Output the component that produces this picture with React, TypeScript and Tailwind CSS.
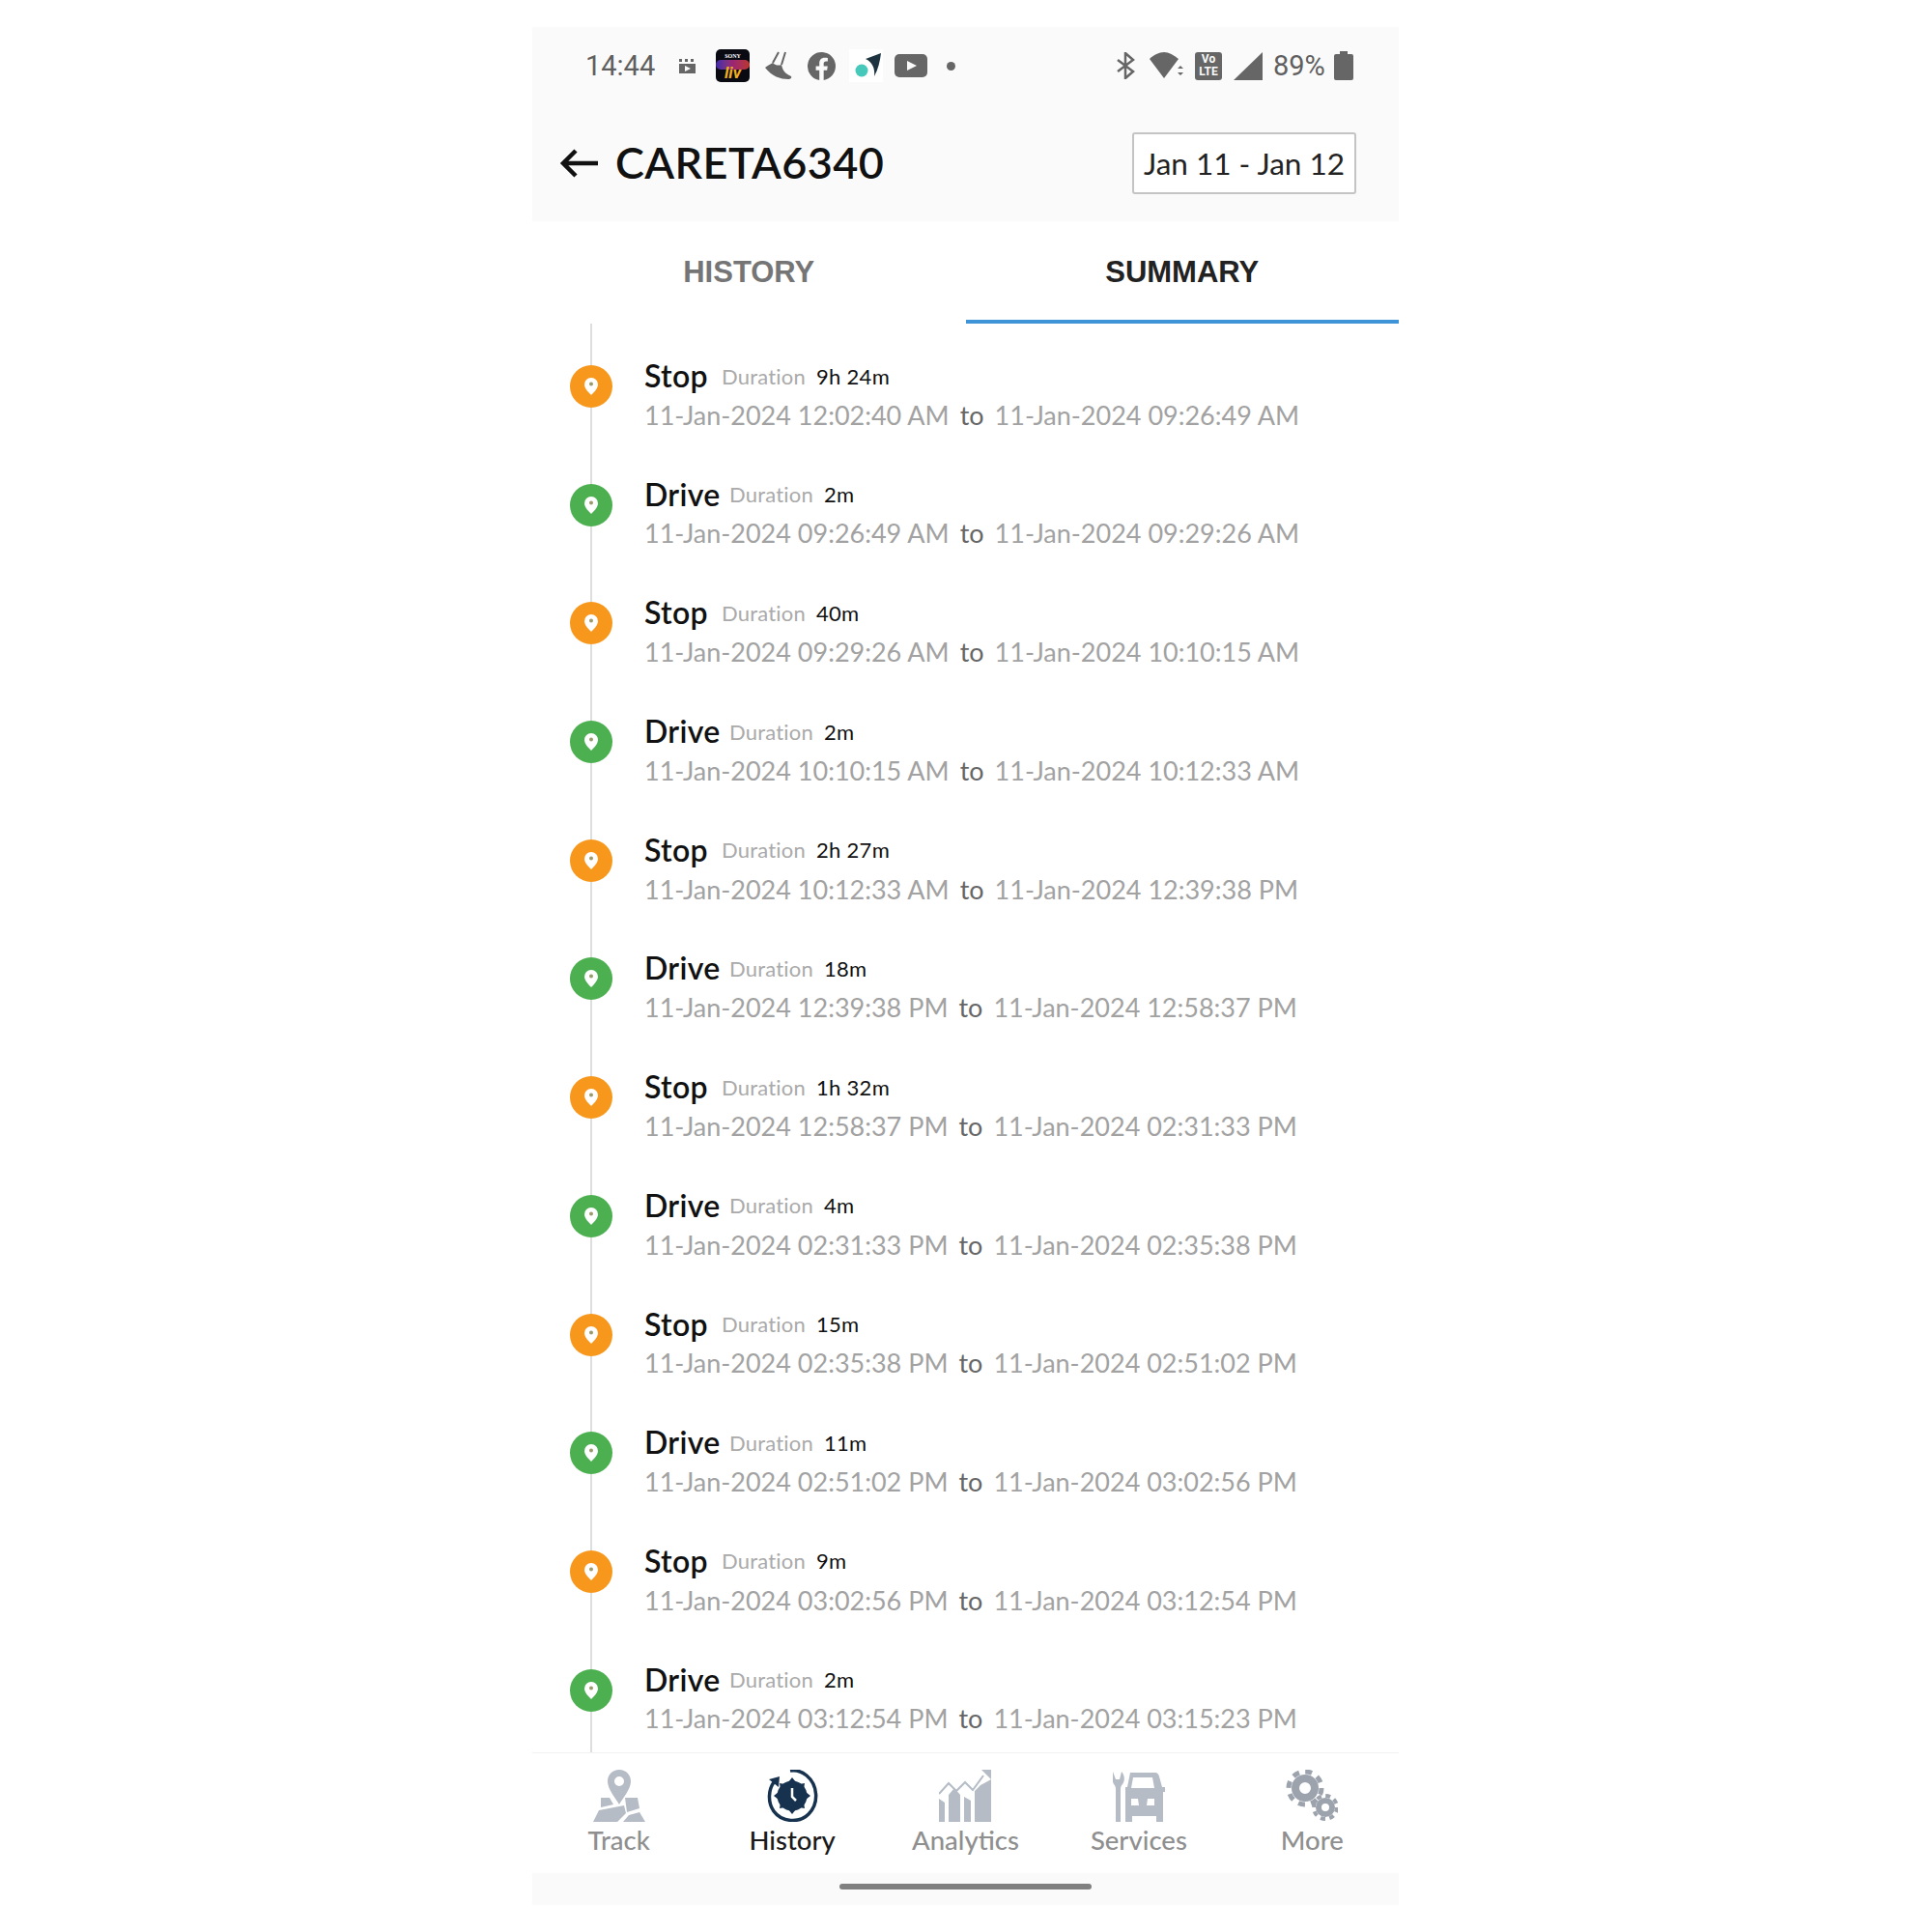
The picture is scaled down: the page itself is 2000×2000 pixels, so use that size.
import React from 'react';

const rows = [
  { type: 'Stop', dur: '9h 24m', from: '11-Jan-2024 12:02:40 AM', to: '11-Jan-2024 09:26:49 AM' },
  { type: 'Drive', dur: '2m', from: '11-Jan-2024 09:26:49 AM', to: '11-Jan-2024 09:29:26 AM' },
  { type: 'Stop', dur: '40m', from: '11-Jan-2024 09:29:26 AM', to: '11-Jan-2024 10:10:15 AM' },
  { type: 'Drive', dur: '2m', from: '11-Jan-2024 10:10:15 AM', to: '11-Jan-2024 10:12:33 AM' },
  { type: 'Stop', dur: '2h 27m', from: '11-Jan-2024 10:12:33 AM', to: '11-Jan-2024 12:39:38 PM' },
  { type: 'Drive', dur: '18m', from: '11-Jan-2024 12:39:38 PM', to: '11-Jan-2024 12:58:37 PM' },
  { type: 'Stop', dur: '1h 32m', from: '11-Jan-2024 12:58:37 PM', to: '11-Jan-2024 02:31:33 PM' },
  { type: 'Drive', dur: '4m', from: '11-Jan-2024 02:31:33 PM', to: '11-Jan-2024 02:35:38 PM' },
  { type: 'Stop', dur: '15m', from: '11-Jan-2024 02:35:38 PM', to: '11-Jan-2024 02:51:02 PM' },
  { type: 'Drive', dur: '11m', from: '11-Jan-2024 02:51:02 PM', to: '11-Jan-2024 03:02:56 PM' },
  { type: 'Stop', dur: '9m', from: '11-Jan-2024 03:02:56 PM', to: '11-Jan-2024 03:12:54 PM' },
  { type: 'Drive', dur: '2m', from: '11-Jan-2024 03:12:54 PM', to: '11-Jan-2024 03:15:23 PM' },
];

function StatusBar() {
  return (
    <div className="flex items-center h-[80px] pl-[55px] pr-[47px] text-[#5f5f5f] font-['Roboto',sans-serif]">
      <span className="text-[29px] w-[71px] pt-[1px]">14:44</span>
      <svg className="ml-[25px]" width="19" height="17" viewBox="0 0 19 17" fill="#666">
        <path d="M1 1h3v3H1zM7 1h3v3H7zM13 1h3v3h-3zM1 6h17v10H1z" />
        <path d="M7 8l6 3-6 3z" fill="#fafafa" />
      </svg>
      <div className="ml-[20px] w-[35px] h-[34px] rounded-[5px] bg-[#0a0a12] flex flex-col items-center overflow-hidden relative">
        <span className="text-[6px] leading-[8px] mt-[3px] font-bold text-white font-['Liberation_Serif',serif]">SONY</span>
        <div className="absolute left-0 right-0 top-[11px] h-[10px] bg-gradient-to-r from-[#4a2bd0] via-[#c02a8a] to-[#e8402a] opacity-80 rounded-full" />
        <span className="absolute bottom-[1px] text-[17px] leading-[17px] font-bold text-[#f0b020] italic">liv</span>
      </div>
      <svg className="ml-[15px]" width="30" height="30" viewBox="0 0 30 30" fill="none" stroke="#666" strokeWidth="2">
        <path d="M15 1L9 12M22 1l-4 13" />
        <path d="M9 12c3 3 6 3 9 2 1 5 3 9 10 12 1 2-1 3-3 3-8 0-17-3-24-12 2-2 5-3 8-5z" fill="#666" stroke="none" />
      </svg>
      <svg className="ml-[15px]" width="29" height="29" viewBox="0 0 24 24" fill="#666">
        <path d="M24 12a12 12 0 1 0-13.900 11.900v-8.400H7.100V12h3V9.400c0-3 1.800-4.700 4.500-4.700 1.300 0 2.700.2 2.700.2v3h-1.500c-1.500 0-2 .9-2 1.900V12h3.400l-.5 3.500h-2.900v8.400A12 12 0 0 0 24 12z" />
      </svg>
      <div className="ml-[14px] w-[35px] h-[34px] bg-white flex items-center justify-center">
        <svg width="33" height="30" viewBox="0 0 33 30">
          <path d="M16 8L32 2c-1 8-3 17-7 24 1-8-2-15-9-18z" fill="#1d3440" />
          <circle cx="12" cy="20" r="6.500" fill="#46c8bb" />
        </svg>
      </div>
      <svg className="ml-[12px]" width="34" height="24" viewBox="0 0 34 24">
        <rect width="34" height="24" rx="5" fill="#666" />
        <path d="M13 7l10 5-10 5z" fill="#fafafa" />
      </svg>
      <span className="ml-[20px] w-[9px] h-[9px] rounded-full bg-[#666]" />
      <div className="flex-1" />
      <svg width="19" height="28" viewBox="0 0 19 28" fill="none" stroke="#666" strokeWidth="2.500">
        <path d="M1 8l16 12-8 7V1l8 7L1 20" />
      </svg>
      <svg className="ml-[15px]" width="35" height="28" viewBox="0 0 35 28" fill="#666">
        <path d="M0 7C4 3 10 0 15 0s10 3 15 7L15 27z" />
        <path d="M29 17l3-3 3 3zM29 21l3 3 3-3z" />
      </svg>
      <div className="ml-[12px] w-[28px] h-[29px] rounded-[3px] bg-[#666] flex flex-col items-center justify-center text-[#fafafa] text-[12px] leading-[13px] font-bold">
        <span>Vo</span>
        <span>LTE</span>
      </div>
      <svg className="ml-[12px]" width="30" height="29" viewBox="0 0 30 29" fill="#666">
        <path d="M30 0v29H0z" />
      </svg>
      <span className="ml-[11px] text-[29px] w-[53px] pt-[1px]">89%</span>
      <svg className="ml-[10px]" width="20" height="30" viewBox="0 0 20 30" fill="#666">
        <path d="M6 0h8v3h4a2 2 0 0 1 2 2v23a2 2 0 0 1-2 2H2a2 2 0 0 1-2-2V5a2 2 0 0 1 2-2h4z" />
      </svg>
    </div>
  );
}

function Header() {
  return (
    <div className="bg-[#fafafa] h-[201px] flex flex-col">
      <StatusBar />
      <div className="flex items-center h-[64px] mt-[29px] pl-[28px] pr-[44px]">
        <svg width="40" height="32" viewBox="0 0 40 32" fill="none" stroke="#111" strokeWidth="4.500">
          <path d="M40 16H4M17 3L4 16l13 13" />
        </svg>
        <h1 className="ml-[18px] text-[45px] font-semibold text-[#111] tracking-[0.4px] font-['Lato',sans-serif]">CARETA6340</h1>
        <div className="ml-auto w-[232px] h-[64px] bg-white border-2 border-[#c4c4c4] rounded-[3px] flex items-center justify-center pt-[2px] text-[31.5px] text-[#222] font-['Lato',sans-serif]">
          Jan 11 - Jan 12
        </div>
      </div>
    </div>
  );
}

function Tabs() {
  return (
    <div className="grid grid-cols-2 h-[106px] text-[31px] font-bold font-['Liberation_Sans',sans-serif]">
      <div className="flex items-center justify-center text-[#757575] pt-[1px]">HISTORY</div>
      <div className="flex items-center justify-center text-[#222] pt-[4px] border-b-4 border-[#3f94d8]">SUMMARY</div>
    </div>
  );
}

function Pin() {
  return (
    <svg width="14" height="18" viewBox="0 0 14 18">
      <path d="M7 0a7 7 0 0 1 7 7c0 4-4 8-7 11C4 15 0 11 0 7a7 7 0 0 1 7-7z" fill="#fff" />
      <circle cx="7" cy="6.500" r="2" fill="#9a9a6a" />
    </svg>
  );
}

function Row({ r }: { r: (typeof rows)[number] }) {
  const stop = r.type === 'Stop';
  return (
    <div className="flex h-[122.7px] font-['Lato',sans-serif]">
      <div className="w-[44px] ml-[39px] flex flex-col items-center shrink-0">
        <div className="w-[2px] h-[43px] bg-[#dedede]" />
        <div className={`w-[44px] h-[44px] rounded-full flex items-center justify-center shrink-0 ${stop ? 'bg-[#f7981d]' : 'bg-[#4caf50]'}`}>
          <Pin />
        </div>
        <div className="w-[2px] flex-1 bg-[#dedede]" />
      </div>
      <div className="ml-[33px] pt-[33px]">
        <div className="flex items-center h-[42px]">
          <span className={`text-[32px] font-semibold text-[#111] tracking-[0.3px] ${stop ? 'w-[68px]' : 'w-[76px]'}`}>{r.type}</span>
          <span className="ml-[12px] text-[22px] text-[#aaaaaa] tracking-[0.2px]">Duration</span>
          <span className="ml-[11px] text-[22px] text-[#111] tracking-[0.3px]">{r.dur}</span>
        </div>
        <div className="flex items-center h-[40px] text-[27px] text-[#a2a2a2] whitespace-nowrap">
          <span>{r.from}</span>
          <span className="ml-[11px] text-[#666]">to</span>
          <span className="ml-[11px]">{r.to}</span>
        </div>
      </div>
    </div>
  );
}

function TrackIcon() {
  return (
    <svg width="54" height="54" viewBox="0 0 54 54" fill="#b5bcc6">
      <path fillRule="evenodd" d="M27 0c7 0 12 5 12 12 0 8-8 17-12 24-4-7-12-16-12-24C15 5 20 0 27 0zm0 7a5 5 0 1 0 0 10 5 5 0 0 0 0-10z" />
      <path d="M8 29h9l4 7-13 3zM33 29h13l2 11-13 4zM6 42l26-5 2 8-9 9H0zM37 47l11-3 6 10H31z" />
    </svg>
  );
}

function HistoryIcon() {
  return (
    <svg width="54" height="54" viewBox="0 0 54 54">
      <path d="M8 13C3 20 1 33 8 43c8 11 26 13 36 3 11-11 10-30-2-40-5-4-11-6-17-5" fill="none" stroke="#16324f" strokeWidth="3.500" />
      <path d="M3 10l11-3-1 11z" fill="#16324f" />
      <circle cx="27" cy="27" r="15.500" fill="#16324f" />
      <path d="M27 8l4 5h-8zM27 46l4-5h-8zM8 27l5-4v8zM46 27l-5-4v8zM14 14l6 1-5 5zM40 14l-6 1 5 5zM14 40l6-1-5-5zM40 40l-6-1 5-5z" fill="#16324f" />
      <path d="M27 19v9l4 4" fill="none" stroke="#fff" strokeWidth="2.500" />
    </svg>
  );
}

function AnalyticsIcon() {
  return (
    <svg width="54" height="54" viewBox="0 0 54 54" fill="#b5bcc6">
      <path d="M0 30l6 4 0 20H0zM10 26l6-7 6 7v28H10zM26 28l7 4 0 22h-7zM37 22l6-6 0 0 11-6v44H37z" />
      <path d="M0 25l10-11 8 8 9-9 8 8 11-15" fill="none" stroke="#b5bcc6" strokeWidth="2" />
      <path d="M44 0h10v10z" />
    </svg>
  );
}

function ServicesIcon() {
  return (
    <svg width="54" height="54" viewBox="0 0 54 54" fill="#b5bcc6">
      <path d="M0 2l3 8h4l2-8c3 3 4 9 1 13-2 2-2 4-2 6v33H3V21c0-2 0-4-2-6C-1 11-1 6 0 2z" />
      <path fillRule="evenodd" d="M18 3h26c2 0 3 1 4 4l3 11h3v5h-2v31h-7v-6H20v6h-7V23l0-5 2 0 3-15zm3 5l-2 11h24l-2-11zM19 30v7h8l-1-7zm24 0h-7l-1 7h8z" />
    </svg>
  );
}

function MoreIcon() {
  return (
    <svg width="54" height="54" viewBox="0 0 54 54" fill="none" stroke="#9ca3ad">
      <circle cx="20" cy="19" r="10" strokeWidth="8" />
      <circle cx="20" cy="19" r="17" strokeWidth="5" strokeDasharray="7 6.300" />
      <circle cx="41" cy="39" r="7" strokeWidth="6" />
      <circle cx="41" cy="39" r="12" strokeWidth="4" strokeDasharray="5 4.400" />
    </svg>
  );
}

function BottomNav() {
  const items = [
    { label: 'Track', icon: <TrackIcon /> },
    { label: 'History', icon: <HistoryIcon />, active: true },
    { label: 'Analytics', icon: <AnalyticsIcon /> },
    { label: 'Services', icon: <ServicesIcon /> },
    { label: 'More', icon: <MoreIcon /> },
  ];
  return (
    <div className="grid grid-cols-5 h-[125px] border-t border-[#f2f2f2] pt-[17px] font-['Lato',sans-serif]">
      {items.map((it) => (
        <div key={it.label} className="flex flex-col items-center">
          {it.icon}
          <span className={`mt-[1px] text-[27.5px] leading-[36px] font-medium ${it.active ? 'text-[#1a1a1a]' : 'text-[#8f8f8f]'}`}>{it.label}</span>
        </div>
      ))}
    </div>
  );
}

export default function App() {
  return (
    <div className="min-h-[2000px] bg-white pt-[28px]">
      <div className="w-[897px] ml-[551px] flex flex-col h-[1944px]">
        <Header />
        <Tabs />
        <div className="h-[1479px] overflow-hidden flex flex-col">
          {rows.map((r) => (
            <Row key={r.from} r={r} />
          ))}
          <div className="w-[2px] flex-1 ml-[60px] bg-[#dedede]" />
        </div>
        <BottomNav />
        <div className="h-[33px] bg-[#fafafa] flex items-center justify-center pb-[5px]">
          <div className="w-[261px] h-[6px] rounded-full bg-[#808080]" />
        </div>
      </div>
    </div>
  );
}
